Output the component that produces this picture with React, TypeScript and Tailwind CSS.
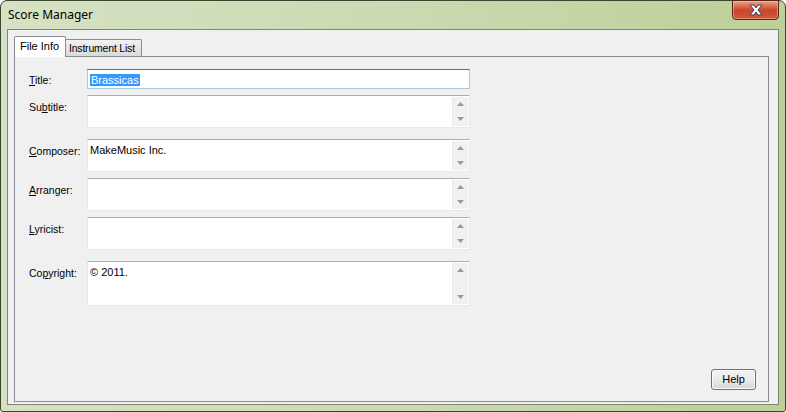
const sans = { fontFamily: '"Liberation Sans", Arial, sans-serif' };

function Arrow({ up }: { up?: boolean }) {
  return (
    <svg width="7" height="4" viewBox="0 0 7 4">
      <path d={up ? "M0 4 L3.5 0 L7 4 Z" : "M0 0 L7 0 L3.5 4 Z"} fill="#9a9a9a" />
    </svg>
  );
}

function Field({
  label,
  height,
  text,
  multi = true,
  gap,
}: {
  label: React.ReactNode;
  height: string;
  text?: string;
  multi?: boolean;
  gap: string;
}) {
  return (
    <div className={`flex ${gap}`}>
      <div className={`w-[58px] text-[10.5px] leading-[13px] text-black ${multi ? "pt-[6px]" : "self-center pt-[2px]"}`}>
        {label}
      </div>
      <div
        className={`flex w-[383px] ${height} border bg-white ${
          multi
            ? "border-[#e3e9ef] border-t-[#abadb3]"
            : "border-[#a4c9e3] border-t-[#3d7bad]"
        }`}
      >
        <div className="flex-1 px-[2px] pt-[4px] text-[11px] leading-[13px] text-black">
          {multi ? (
            text
          ) : (
            <span className="bg-[#3399ff] px-[1px] text-white">{text}</span>
          )}
        </div>
        {multi && (
          <div className="my-[1px] mr-[1px] flex w-[16px] flex-col items-center justify-between border-l border-[#e8e8e8] bg-[#f1f1f1] py-[5px]">
            <Arrow up />
            <Arrow />
          </div>
        )}
      </div>
    </div>
  );
}

export default function App() {
  return (
    <div className="h-[412px] w-[786px] overflow-hidden bg-white" style={sans}>
      <div className="flex h-[412px] w-[786px] flex-col rounded-t-[7px] rounded-b-[3px] border border-[#3b4630] bg-[#b7cb92] bg-gradient-to-r from-[#d6e2c3] via-[#cbdab2] to-[#bcd098]">
        <div className="flex h-[28px] items-start">
          <div
            className="mt-[6px] flex-1 pl-[7px] text-[12px] leading-[16px] text-black"
            style={{ fontFamily: '"Noto Sans", "Open Sans", sans-serif' }}
          >
            Score Manager
          </div>
          <div className="mr-[6px] mt-[-1px] flex h-[20px] w-[47px] items-center justify-center rounded-b-[4px] border border-[#5b2418] bg-gradient-to-b from-[#e9a48f] via-[#c9442a] to-[#d2583a] shadow-[inset_0_0_0_1px_rgba(255,200,180,0.5)]">
            <svg width="16" height="12" viewBox="0 0 16 12">
              <path
                d="M2 1 L6 1 L8 4 L10 1 L14 1 L10 6 L14 11 L10 11 L8 8 L6 11 L2 11 L6 6 Z"
                fill="#ffffff"
                stroke="#3a3d52"
                strokeWidth="1"
                strokeLinejoin="round"
              />
            </svg>
          </div>
        </div>
        <div className="mx-[6px] mb-[6px] flex flex-1 flex-col border border-[#7d8771] bg-[#f0f0f0] pb-[2px] pl-[6px] pr-[9px] pt-[6px]">
          <div className="flex items-end whitespace-nowrap text-[11px] leading-[13px] text-black">
            <div className="relative z-10 mb-[-1px] h-[21px] w-[52px] rounded-t-[2px] border border-b-0 border-[#898c95] bg-white pl-[5px] pt-[3px]">
              File Info
            </div>
            <div className="ml-[-1px] h-[17px] w-[77px] rounded-t-[2px] border border-b-0 border-[#898c95] bg-gradient-to-b from-[#f2f2f2] to-[#dadada] pl-[3px] pt-[2px] text-[10.5px] tracking-[-0.2px]">
              Instrument List
            </div>
          </div>
          <div className="flex flex-1 flex-col border border-[#898c95] bg-[#f0f0f0] pl-[14px] pr-[12px] pt-[12px] pb-[11px]">
            <Field
              label={<><span className="underline">T</span>itle:</>}
              height="h-[20px]"
              text="Brassicas"
              multi={false}
              gap=""
            />
            <Field
              label={<>Su<span className="underline">b</span>title:</>}
              height="h-[33px]"
              gap="mt-[6px]"
            />
            <Field
              label={<><span className="underline">C</span>omposer:</>}
              height="h-[33px]"
              text="MakeMusic Inc."
              gap="mt-[11px]"
            />
            <Field
              label={<><span className="underline">A</span>rranger:</>}
              height="h-[33px]"
              gap="mt-[6px]"
            />
            <Field
              label={<><span className="underline">L</span>yricist:</>}
              height="h-[33px]"
              gap="mt-[6px]"
            />
            <Field
              label={<>Co<span className="underline">p</span>yright:</>}
              height="h-[45px]"
              text="© 2011."
              gap="mt-[11px]"
            />
            <div className="mt-auto flex justify-end">
              <button className="h-[21px] w-[45px] rounded-[3px] border border-[#707070] bg-gradient-to-b from-[#f2f2f2] via-[#ebebeb] to-[#d6d6d6] text-[11px] leading-[13px] text-black shadow-[inset_0_0_0_1px_#fcfcfc]">
                Help
              </button>
            </div>
          </div>
        </div>
      </div>
    </div>
  );
}
